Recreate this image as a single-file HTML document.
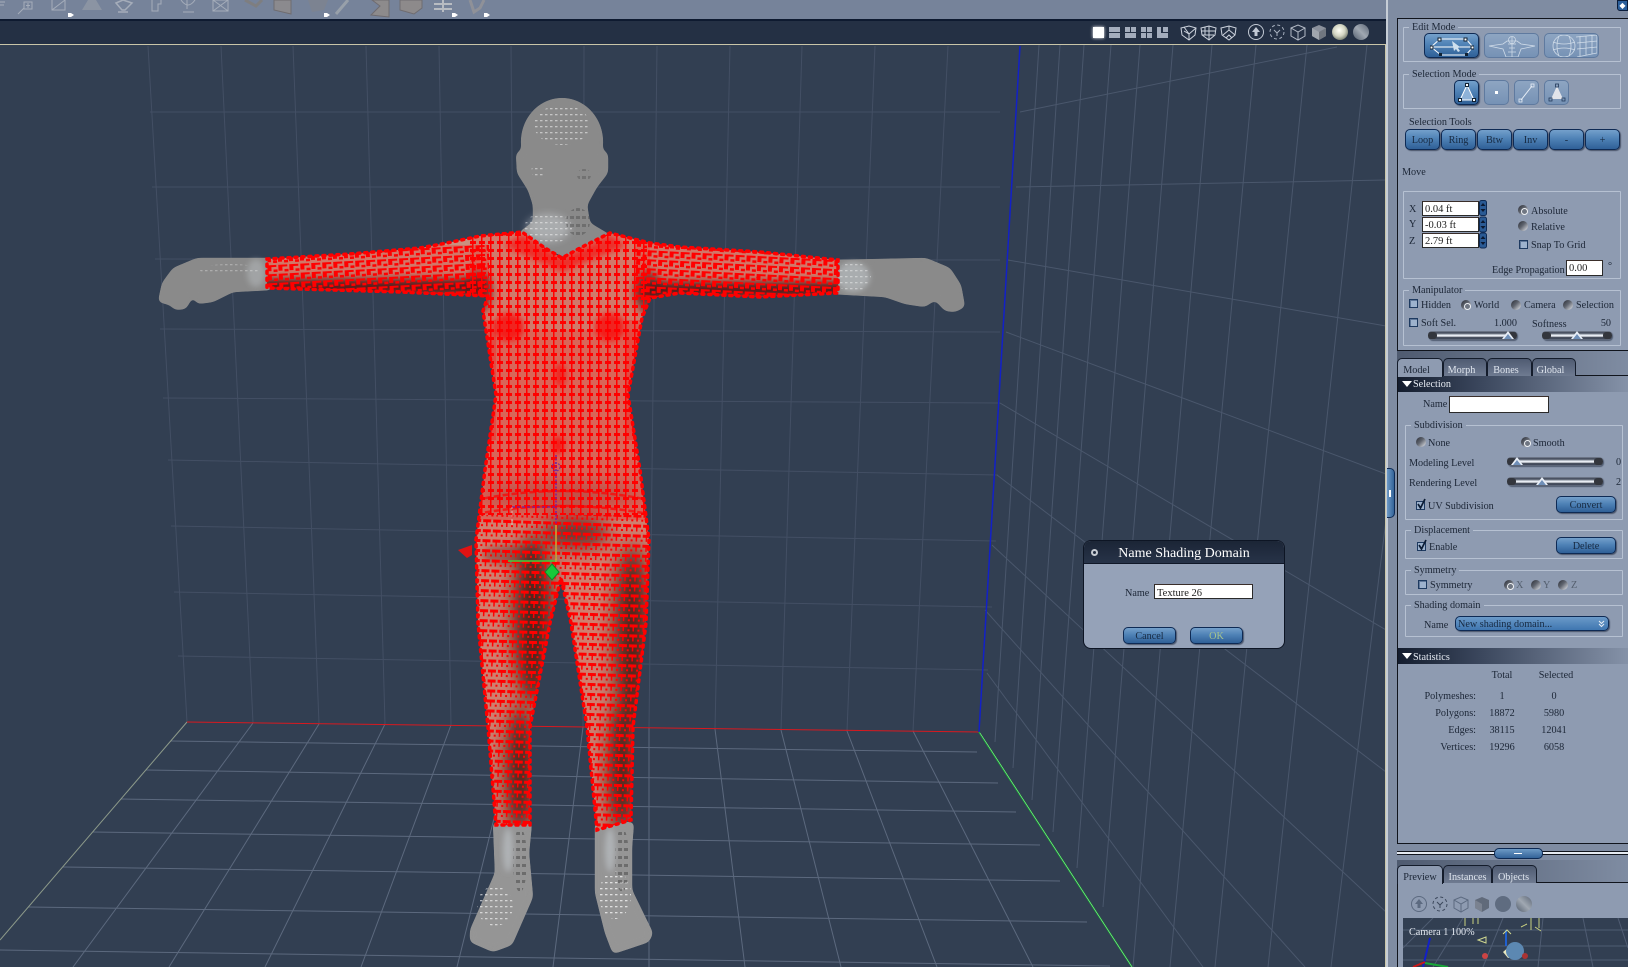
<!DOCTYPE html>
<html><head><meta charset="utf-8"><title>Name Shading Domain</title>
<style>
html,body{margin:0;padding:0;width:1628px;height:967px;overflow:hidden;background:#323f52}
*{box-sizing:border-box}
.a{position:absolute}
.t{position:absolute;white-space:nowrap;font:10.2px/12px "Liberation Serif",serif;color:#1c2636;margin-top:1px}
.w{color:#e6ebf3}
.fs{position:absolute;border:1px solid #b6c1d2;border-radius:1px}
.lg{position:absolute;top:-6px;left:5px;padding:0 3px;background:#8e9bb1;font:10.2px/12px "Liberation Serif",serif;color:#1c2636;white-space:nowrap}
.b{position:absolute;border:1px solid #0e2a54;border-radius:5px;background:linear-gradient(#74a0cb,#4f82b6 45%,#2f6097);box-shadow:1px 1px 1px rgba(20,30,50,.55);font:10.2px/1 "Liberation Serif",serif;color:#172a42;display:flex;align-items:center;justify-content:center;padding-top:4px}
.off{background:linear-gradient(#8ea5c2,#7692b5);border:1px solid #5f7a9f;box-shadow:none}
.b.ic{padding-top:0}
.in{position:absolute;background:#fff;border:1px solid #2a2a2a;border-top-color:#3a2e2a;font:10.5px/15px "Liberation Serif",serif;color:#222;padding-left:2px;white-space:nowrap}
.r{position:absolute;width:10px;height:10px;border-radius:50%;background:linear-gradient(135deg,#2a2d36,#5f646e 45%,#e6e9ee)}
.r.s:after{content:"";position:absolute;left:2.500px;top:2.500px;width:5px;height:5px;border-radius:50%;background:#6f7682;border:1px solid #eef1f5}
.c{position:absolute;width:9px;height:9px;border:1px solid #1e3a60;background:#9db2cd;box-shadow:inset 1px 1px 0 #60789a}
.sl{position:absolute;height:9px;border-radius:4px;background:linear-gradient(#7c8596,#3a4252 22%,#dfe5ee 45%,#f2f5fa 55%,#2e3646 75%,#6a7486);box-shadow:1px 1px 1px rgba(20,30,50,.5)}
.sl:before,.sl:after{content:"";position:absolute;top:1px;width:9px;height:7px;background:#33363d;border-radius:3px}
.sl:before{left:0}.sl:after{right:0}
.th{position:absolute;width:0;height:0;border-left:6px solid transparent;border-right:6px solid transparent;border-bottom:8px solid #e8eef7;z-index:2}
.th:after{content:"";position:absolute;left:-4px;top:3px;border-left:4px solid transparent;border-right:4px solid transparent;border-bottom:5px solid #6f8fb8}
.tab{position:absolute;height:18px;border:1px solid #141c2b;border-bottom:none;border-radius:5px 5px 0 0;font:10.2px/23px "Liberation Serif",serif;text-align:center;background:linear-gradient(#4f5b72,#6f7b91);color:#dfe5ee;overflow:hidden}
.tab.on{background:#8e9bb1;color:#1c2636;z-index:2}
.tab.m{padding-right:7px}
.hd{position:absolute;left:1398px;width:230px;height:16px;background:linear-gradient(90deg,#141d2e,#3a465c 35%,#8592a8);font:10.2px/17px "Liberation Serif",serif;color:#e8edf4;padding-left:15px}
.hd:before{content:"";position:absolute;left:4px;top:5px;border-left:5px solid transparent;border-right:5px solid transparent;border-top:6px solid #fff}
</style></head><body>

<!-- toolbar -->
<div class="a" style="left:0;top:0;width:1388px;height:19px;background:#76839a"></div>
<svg class="a" style="left:0;top:0" width="520" height="19" fill="none" stroke="#a5adba" stroke-width="1">
<path d="M0 2h5M0 5h4"/><path d="M18 14l6-6M24 2h8v7h-8zM28 3v5M26 5.500h4"/>
<path d="M52 0v10h13V0M52 10L65 0"/><path d="M82 10l6-10h8l6 10z" fill="#8b94a3" stroke="none"/>
<path d="M116 3l7-3 9 3-7 7h-3zM118 12h10" stroke-width="1.500"/><path d="M152 0v11h6V4h3V0"/><path d="M187 0v9M181 0q7 10 14 0M183 12h11"/><path d="M213 0v11h15V0zM213 11l15-11M228 11L213 0"/>
<path d="M245 0l11 6 6-6" stroke="#7e7e80" stroke-width="3"/><path d="M274 0v10l17 4V0z" fill="#8b8a8e" stroke="#6f6c70"/><path d="M308 0h20l-4 10-12 2z" fill="#7c8391" stroke="none"/><path d="M336 14l12-14" stroke="#98a0aa" stroke-width="3"/>
<path d="M372 0l8 6-9 9 18 2V0z" fill="#8d8b8c" stroke="#6f6c70"/><path d="M400 0v10l14 4 8-6V0z" fill="#8d8a8b" stroke="#6f6c70"/><path d="M434 4h18M434 9h18M443 0v12" stroke="#b8bcc2" stroke-width="2"/><path d="M470 0l4 12 6-4 4-8" stroke="#8f9198" stroke-width="3"/>
<g fill="#fff" stroke="none"><path d="M68 13h3l3 2-3 2h-3z"/><path d="M324 13h3l3 2-3 2h-3z"/><path d="M452 13h3l3 2-3 2h-3z"/><path d="M484 13h3l3 2-3 2h-3z"/></g>
</svg>
<div class="a" style="left:0;top:19px;width:1388px;height:2px;background:#0e1a30"></div>
<div class="a" style="left:0;top:21px;width:1388px;height:23px;background:#243044"></div>
<div class="a" style="left:0;top:44px;width:1386px;height:1px;background:#c9c5a8"></div>

<!-- view icons -->
<div class="a" style="left:1093px;top:27px;width:11px;height:11px;background:#fff;box-shadow:0 0 3px #fff"></div>
<svg class="a" style="left:1105px;top:22px" width="285" height="22" fill="none">
<g fill="#a4adbd"><rect x="4" y="5" width="11" height="5"/><rect x="4" y="11" width="11" height="5"/><rect x="20" y="5" width="5" height="5"/><rect x="26" y="5" width="5" height="5"/><rect x="20" y="11" width="11" height="5"/><rect x="36" y="5" width="5" height="5"/><rect x="42" y="5" width="5" height="5"/><rect x="36" y="11" width="5" height="5"/><rect x="42" y="11" width="5" height="5"/><path d="M52 5h4v6h7v5H52zM58 5h5v5h-5z"/></g>
<g stroke="#cdd3dd" stroke-width="1"><path d="M76 6l8-2 7 2-1 7-6 5-7-5z"/><path d="M79 5l5 7 7-6M84 12v6M79 9l5 3"/><path d="M96 6l8-2 7 2-1 7-6 5-7-5z"/><path d="M100 5v8M104 4v14M96 9h14M97 13h12"/><path d="M116 6l8-2 7 2-1 7-6 5-7-5z"/><path d="M118 13l6-5 6 5M124 8v-4M121 16l3-3 3 3"/></g>
<circle cx="151" cy="10" r="7.500" stroke="#c2c9d4"/><path d="M151 5l-4 5h2.500v4h3v-4h2.500z" fill="#c2c9d4"/>
<circle cx="172" cy="10" r="7" stroke="#a8b1bf" stroke-dasharray="3 2.500"/><path d="M169 8l3 3 3-3M172 11v3" stroke="#a8b1bf"/>
<path d="M186 6l7-3 7 3v8l-7 4-7-4zM186 6l7 4 7-4M193 10v8" stroke="#b4bbc7"/>
<path d="M207 6l7-3 7 3v8l-7 4-7-4z" fill="#8b919c"/><path d="M207 6l7 4v8l-7-4z" fill="#a0a6ae"/><path d="M221 6l-7 4v8l7-4z" fill="#70767f"/>
<defs><radialGradient id="sp" cx=".45" cy=".4" r=".65"><stop offset="0" stop-color="#fffff6"/><stop offset=".55" stop-color="#d2d4c2"/><stop offset="1" stop-color="#6e7568"/></radialGradient>
<linearGradient id="sp2" x1="0" y1="1" x2="1" y2="0"><stop offset="0" stop-color="#515c6c"/><stop offset=".5" stop-color="#a0a8b2"/><stop offset="1" stop-color="#5c6676"/></linearGradient></defs>
<circle cx="235" cy="10" r="8" fill="url(#sp)"/><circle cx="256" cy="10" r="8" fill="url(#sp2)"/>
</svg>

<!-- viewport -->
<svg class="a" style="left:0;top:45px" width="1386" height="922" viewBox="0 45 1386 922">
<defs>
<pattern id="mesh" width="9" height="8" patternUnits="userSpaceOnUse" patternTransform="translate(2 1)">
 <rect x="0" y="0" width="6" height="3" fill="#f00"/><rect x="2" y="3" width="1.500" height="5" fill="#f00"/>
</pattern>
<pattern id="meshL" width="10" height="10" patternUnits="userSpaceOnUse" patternTransform="translate(1 2) rotate(2)">
 <rect x="0" y="0" width="8" height="3" fill="#f00"/><rect x="3" y="3" width="1.500" height="4" fill="#f00"/><rect x="8" y="5" width="2" height="2" fill="#f00"/>
</pattern>
<pattern id="meshA" width="11" height="9" patternUnits="userSpaceOnUse" patternTransform="rotate(-3)">
 <rect x="0" y="0" width="4" height="6" fill="#f00"/><rect x="0" y="0" width="9" height="2" fill="#f00"/><rect x="6" y="4.500" width="4" height="2.500" fill="#f00"/>
</pattern>
<pattern id="meshB" width="11" height="9" patternUnits="userSpaceOnUse" patternTransform="rotate(3)">
 <rect x="0" y="0" width="4" height="6" fill="#f00"/><rect x="0" y="0" width="9" height="2" fill="#f00"/><rect x="6" y="4.500" width="4" height="2.500" fill="#f00"/>
</pattern>
<pattern id="dots" width="5" height="6" patternUnits="userSpaceOnUse"><rect width="2.500" height="1.300" fill="#fff"/></pattern>
<pattern id="dotsD" width="6" height="8" patternUnits="userSpaceOnUse"><rect width="4" height="3" fill="#3a3a3a"/></pattern>
<filter id="bl" x="-100%" y="-60%" width="300%" height="220%"><feGaussianBlur stdDeviation="9"/></filter>
<filter id="bs" x="-40%" y="-60%" width="180%" height="220%"><feGaussianBlur stdDeviation="4"/></filter>
<filter id="bt" x="-40%" y="-40%" width="180%" height="180%"><feGaussianBlur stdDeviation="3"/></filter>
<filter id="goo" x="-5%" y="-5%" width="110%" height="110%" color-interpolation-filters="sRGB"><feGaussianBlur stdDeviation="3"/><feColorMatrix values="1 0 0 0 0 0 1 0 0 0 0 0 1 0 0 0 0 0 18 -8"/></filter>
<path id="body" d="M267 259L350 254L420 248L447 243L480 236L522 232L545 248L562 258L580 248L610 233L650 243L680 247L760 252L838 260L838 293L760 297L680 293L650 298L642 318L628 395L640 470L649 540L646 623L633 727L631 820L597 830L587 727L571 623L561 578L550 623L530 727L530 825L496 825L488 727L478 623L476 540L485 470L496 395L483 311L488 296L400 292L267 288Z"/>
<mask id="bm" maskUnits="userSpaceOnUse" x="0" y="0" width="1386" height="967"><use href="#body" fill="#fff" filter="url(#goo)"/></mask>
</defs>

<!-- back wall grid -->
<g stroke="#434f64" stroke-width="1" fill="none">
<path d="M148 46L187 722M221 46L253 723M293 46L319 724M366 46L385 724M439 46L451 725M511 46L517 726M584 46L583 727M657 46L649 728M730 46L715 729M802 46L781 730M875 46L847 731M948 46L913 731"/>
<path d="M150 112L1000 112M152 187L1000 187M155 259L1000 260M160 329L1000 332M163 398L1000 403M168 460L998 475M171 526L996 541M174 592L992 607M178 656L988 670"/>
</g>
<!-- right wall -->
<g stroke="#4a576c" stroke-width="1" fill="none">
<path d="M1039 45L995 742M1060 45L1013 768M1084 45L1032 800M1111 45L1053 832M1140 45L1077 868M1173 45L1103 907M1212 45L1133 967M1256 45L1170 967M1307 45L1215 967M1367 45L1268 967M1386 520L1331 967"/>
<path d="M1020 112L1337 47M1016 187L1386 180M1008 260L1386 326M1006 332L1386 474M1000 403L1386 630M997 475L1386 772M992 545L1386 912M985 610L1305 967M987 673L1203 967"/>
</g>
<!-- floor -->
<g stroke="#5c697e" stroke-width="1" fill="none">
<path d="M253 723L73 967M319 724L169 967M385 724L265 967M451 725L361 967M517 726L457 967M583 727L553 967M649 728L649 967M715 729L745 967M781 730L841 967M847 731L937 967M913 731L1033 967"/>
<path d="M171 741L977 752M146 770L998 783M121 799L1016 812M93 832L1040 845M63 867L1060 881M28 907L1087 922M0 950L1110 966"/>
</g>
<path d="M187 722L0 940" stroke="#8d9a8a" stroke-width="1" fill="none"/>
<path d="M187 722L979 732" stroke="#d8191f" stroke-width="1" fill="none"/>
<path d="M979 732L1020 46" stroke="#1220c8" stroke-width="1.500" fill="none"/>
<path d="M979 732L1132 967" stroke="#18a838" stroke-width="1.600" fill="none"/>
<path d="M980 733L1132 967" stroke="#b9f0b0" stroke-width=".5" fill="none"/>

<!-- gray parts -->
<g fill="#8a8a8a" filter="url(#goo)">
<ellipse cx="562" cy="142" rx="41" ry="44"/>
<path d="M516 153L522 150L602 150L608 153L608 173L597 187L587 205L590 223L612 236L603 242L567 258L530 242L518 233L533 222L533 205L528 190L517 173Z"/>
<path d="M272 258L197 258L173 268L162 283L158 302L170 305L175 310L186 309L193 296L197 304L213 302L233 292L272 290Z"/>
<path d="M832 260L926 258L950 268L961 285L965 307L955 312L945 311L935 300L925 307L905 304L885 297L832 294Z"/>
<path d="M493 822L532 822L529 853L533 897L512 945L493 952L470 942L470 930L495 873Z" fill="#959595"/>
<path d="M595 822L634 822L632 847L632 890L653 933L649 942L613 954L605 933L595 893L595 873Z" fill="#959595"/>
</g>
<!-- gray highlights -->
<ellipse cx="562" cy="125" rx="28" ry="20" fill="url(#dots)" opacity=".5"/>
<ellipse cx="538" cy="171" rx="7" ry="6" fill="url(#dots)" opacity=".45"/>
<ellipse cx="584" cy="175" rx="7" ry="6" fill="url(#dotsD)" opacity=".3"/>
<ellipse cx="548" cy="228" rx="22" ry="14" fill="#c9ced2" opacity=".5" filter="url(#bs)"/>
<ellipse cx="548" cy="228" rx="24" ry="16" fill="url(#dots)" opacity=".45"/>
<ellipse cx="578" cy="222" rx="12" ry="14" fill="url(#dotsD)" opacity=".35"/>
<ellipse cx="256" cy="273" rx="9" ry="14" fill="#c4cace" opacity=".4" filter="url(#bt)"/>
<ellipse cx="853" cy="277" rx="17" ry="15" fill="#c4cace" opacity=".55" filter="url(#bt)"/>
<ellipse cx="853" cy="277" rx="18" ry="15" fill="url(#dots)" opacity=".4"/>
<ellipse cx="230" cy="270" rx="30" ry="6" fill="url(#dots)" opacity=".3"/>
<ellipse cx="495" cy="906" rx="18" ry="20" fill="url(#dots)" opacity=".6"/>
<ellipse cx="615" cy="895" rx="16" ry="24" fill="url(#dots)" opacity=".7"/>
<ellipse cx="520" cy="860" rx="7" ry="32" fill="url(#dotsD)" opacity=".45"/>
<ellipse cx="622" cy="860" rx="7" ry="32" fill="url(#dotsD)" opacity=".45"/>
<ellipse cx="508" cy="850" rx="5" ry="22" fill="#c6ccd2" opacity=".55" filter="url(#bt)"/>
<ellipse cx="610" cy="850" rx="5" ry="22" fill="#c6ccd2" opacity=".55" filter="url(#bt)"/>

<!-- body -->
<g mask="url(#bm)">
 <use href="#body" fill="#c9917f"/>
 <rect x="262" y="279" width="225" height="16" fill="#2e1f1d" filter="url(#bs)" opacity=".95"/>
 <rect x="640" y="282" width="205" height="16" fill="#2e1f1d" filter="url(#bs)" opacity=".95"/>
 <ellipse cx="478" cy="292" rx="14" ry="22" fill="#2e1c1a" filter="url(#bs)" opacity=".6"/>
 <ellipse cx="648" cy="292" rx="14" ry="22" fill="#2e1c1a" filter="url(#bs)" opacity=".6"/>
 <ellipse cx="533" cy="620" rx="20" ry="85" fill="#20120f" filter="url(#bl)" opacity=".85"/>
 <ellipse cx="520" cy="770" rx="14" ry="65" fill="#20120f" filter="url(#bl)" opacity=".9"/>
 <ellipse cx="632" cy="640" rx="18" ry="95" fill="#20120f" filter="url(#bl)" opacity=".85"/>
 <ellipse cx="622" cy="770" rx="14" ry="65" fill="#20120f" filter="url(#bl)" opacity=".9"/>
 <ellipse cx="575" cy="533" rx="34" ry="16" fill="#2a1614" filter="url(#bl)" opacity=".7"/>
 <ellipse cx="510" cy="555" rx="28" ry="10" fill="#3a2220" filter="url(#bs)" opacity=".4"/>
 <ellipse cx="562" cy="495" rx="80" ry="12" fill="#3a2220" filter="url(#bl)" opacity=".3"/>
 <rect x="470" y="230" width="180" height="100" fill="#f00" opacity=".16"/>
 <rect x="470" y="330" width="180" height="190" fill="#f00" opacity=".3"/>
 <rect x="460" y="520" width="200" height="310" fill="#f00" opacity=".12"/>
 <rect x="264" y="245" width="225" height="60" fill="#f00" opacity=".18"/>
 <rect x="636" y="240" width="210" height="60" fill="#f00" opacity=".18"/>
 <rect x="264" y="245" width="225" height="60" fill="url(#meshA)"/>
 <rect x="636" y="240" width="210" height="60" fill="url(#meshB)"/>
 <rect x="470" y="230" width="180" height="285" fill="url(#mesh)"/>
 <rect x="460" y="515" width="200" height="320" fill="url(#meshL)"/>
 <g fill="none" stroke="#f00" stroke-width="2.500" stroke-dasharray="6 3" opacity=".7">
  <path d="M476 500Q562 482 649 500M476 514Q562 498 649 514"/>
 </g>
 <path d="M522 234L562 258L610 235L626 246L562 272L504 246Z" fill="#f00" opacity=".6" filter="url(#bt)"/>
 <ellipse cx="509" cy="327" rx="15" ry="14" fill="#f00" filter="url(#bt)" opacity=".7"/>
 <ellipse cx="610" cy="327" rx="15" ry="14" fill="#f00" filter="url(#bt)" opacity=".7"/>
 <ellipse cx="560" cy="375" rx="6" ry="12" fill="#f00" filter="url(#bt)" opacity=".6"/>
 <ellipse cx="558" cy="445" rx="6" ry="9" fill="#f00" filter="url(#bt)" opacity=".7"/>
 <rect x="478" y="320" width="18" height="120" fill="#f00" opacity=".25"/>
 <rect x="625" y="320" width="18" height="120" fill="#f00" opacity=".25"/>
</g>
<use href="#body" fill="none" stroke="#f00" stroke-width="3.500" stroke-linecap="round" stroke-dasharray="2 5"/>

<!-- manipulator -->
<g fill="none">
<path d="M556 455V562" stroke="#7a1ea0" stroke-width="1.500" stroke-dasharray="2 1.500"/>
<path d="M556 525V562" stroke="#c8b030" stroke-width="1.500"/>
<path d="M512 507H556" stroke="#6a22a8" stroke-width="1.200" stroke-dasharray="3 2"/>
<path d="M512 507V525" stroke="#fff" stroke-width="1" stroke-dasharray="2 2" opacity=".5"/>
<path d="M508 561H555" stroke="#3fd23a" stroke-width="1.500"/>
<circle cx="556" cy="467" r="4" stroke="#5a2cb0" stroke-dasharray="2 1.500"/>
</g>
<path d="M552 564l7 8-7 8-7-8z" fill="#17c93a" stroke="#0d8a26"/>
<path d="M458 550l14-5v10l-5 3z" fill="#e01212"/>
</svg>

<!-- divider strip -->
<div class="a" style="left:1386px;top:0;width:2px;height:967px;background:#c6cdd6"></div>
<div class="a" style="left:1385px;top:45px;width:1px;height:922px;background:#c9c5a8"></div>
<div class="a" style="left:1388px;top:0;width:240px;height:967px;background:#7f8ca2"></div>
<div class="a" style="left:1387px;top:468px;width:8px;height:50px;background:linear-gradient(90deg,#6d9ac6,#336399);border:1px solid #0e2a54;border-left:none;border-radius:0 5px 5px 0"><div class="a" style="left:2px;top:21px;width:2px;height:7px;background:#fff"></div></div>
<div class="a" style="left:1617px;top:0;width:11px;height:11px;background:#2b5f9b;border:1px solid #0a1c3a;border-radius:0 0 0 3px;color:#fff;font:8px/9px 'Liberation Sans',sans-serif;text-align:center">◆</div>

<!-- top panel -->
<div class="a" style="left:1397px;top:18px;width:231px;height:333px;background:#8e9bb1;border-left:1px solid #10141c;border-top:1px solid #10141c;border-bottom:1px solid #10141c"></div>

<div class="fs" style="left:1403px;top:27px;width:218px;height:35px"><div class="lg">Edit Mode</div></div>
<div class="b ic" style="left:1424px;top:33px;width:55px;height:25px"><svg width="44" height="20" fill="none" stroke="#fff" stroke-width="1"><path d="M1 11L10 3H36L43 11L36 19H11Z"/><path d="M2 11H42"/><path d="M22 5l8 6-2 1 2 3-2 1-2-3-2 2z" fill="#cfe0ee" stroke="none"/><g fill="#fff" stroke="#123"><rect x="8" y="2" width="3" height="3"/><rect x="34" y="2" width="3" height="3"/><rect x="0" y="10" width="3" height="3"/><rect x="41" y="10" width="3" height="3"/></g><g fill="#123" stroke="none"><rect x="9" y="17" width="3" height="3"/><rect x="35" y="17" width="3" height="3"/></g></svg></div>
<div class="b off ic" style="left:1484px;top:33px;width:55px;height:25px"><svg width="50" height="22" fill="none" stroke="#cfdbe8" stroke-width=".8"><path d="M2 11L16 9L20 6H30L34 9L48 11L34 14L31 22H19L16 14Z"/><circle cx="25" cy="5" r="3.500"/><path d="M21 9H29M22 13H28M25 2V22M21 17H29"/></svg></div>
<div class="b off ic" style="left:1544px;top:33px;width:55px;height:25px"><svg width="50" height="22" fill="none" stroke="#cfdbe8" stroke-width=".8"><circle cx="17" cy="11" r="11"/><path d="M6 7q11 4 22 0M6 15q11-4 22 0M12 1q-4 10 0 20M22 1q4 10 0 20"/><path d="M29 2L50 0V18L30 22M33 1V21M39 1V20M45 0V19M30 8L50 6M30 14L50 12"/></svg></div>

<div class="fs" style="left:1403px;top:74px;width:218px;height:35px"><div class="lg">Selection Mode</div></div>
<div class="b ic" style="left:1454px;top:80px;width:25px;height:25px"><svg width="20" height="20"><path d="M10 2L17 17H3Z" fill="#8eb2d8" stroke="#fff"/><g fill="#fff" stroke="#123"><rect x="8.500" y="0.500" width="3" height="3"/><rect x="1.500" y="15.500" width="3" height="3"/><rect x="15.500" y="15.500" width="3" height="3"/></g></svg></div>
<div class="b off ic" style="left:1484px;top:80px;width:25px;height:25px"><div style="width:3px;height:3px;background:#fff"></div></div>
<div class="b off ic" style="left:1514px;top:80px;width:25px;height:25px"><svg width="20" height="20" fill="none" stroke="#e6edf5"><path d="M4 17L15 3"/><rect x="14" y="1" width="3" height="3" stroke-width=".8"/><rect x="2" y="16" width="3" height="3" stroke-width=".8"/></svg></div>
<div class="b off ic" style="left:1544px;top:80px;width:25px;height:25px"><svg width="20" height="20"><path d="M10 3L16 16H4Z" fill="#e2e4ea"/><g fill="none" stroke="#243a5a" stroke-width=".8"><rect x="8.500" y="1" width="3" height="3"/><rect x="2" y="15" width="3" height="3"/><rect x="15" y="15" width="3" height="3"/></g></svg></div>

<div class="t" style="left:1409px;top:116px">Selection Tools</div>
<div class="b" style="left:1405px;top:129px;width:35px;height:21px">Loop</div>
<div class="b" style="left:1441px;top:129px;width:35px;height:21px">Ring</div>
<div class="b" style="left:1477px;top:129px;width:35px;height:21px">Btw</div>
<div class="b" style="left:1513px;top:129px;width:35px;height:21px">Inv</div>
<div class="b" style="left:1549px;top:129px;width:35px;height:21px">-</div>
<div class="b" style="left:1585px;top:129px;width:35px;height:21px">+</div>
<div class="t" style="left:1402px;top:166px">Move</div>

<div class="fs" style="left:1403px;top:191px;width:218px;height:88px"></div>
<div class="t" style="left:1409px;top:203px">X</div><div class="t" style="left:1409px;top:218px">Y</div><div class="t" style="left:1409px;top:235px">Z</div>
<div class="in" style="left:1422px;top:201px;width:57px;height:15px">0.04 ft</div>
<div class="in" style="left:1422px;top:217px;width:57px;height:15px">-0.03 ft</div>
<div class="in" style="left:1422px;top:233px;width:57px;height:15px">2.79 ft</div>
<svg class="a" style="left:1479px;top:200px" width="9" height="49"><g fill="#2a5a94" stroke="#0e2a54"><rect x=".5" y=".5" width="7" height="15" rx="2"/><rect x=".5" y="17" width="7" height="15" rx="2"/><rect x=".5" y="33" width="7" height="15" rx="2"/></g><path d="M4 3l2.500 3h-5zM4 12l2.500-3h-5zM4 20l2.500 3h-5zM4 29l2.500-3h-5zM4 36l2.500 3h-5zM4 45l2.500-3h-5z" fill="#0b1830"/></svg>
<div class="r s" style="left:1518px;top:205px"></div><div class="t" style="left:1531px;top:205px">Absolute</div>
<div class="r" style="left:1518px;top:221px"></div><div class="t" style="left:1531px;top:221px">Relative</div>
<div class="c" style="left:1519px;top:240px"></div><div class="t" style="left:1531px;top:239px">Snap To Grid</div>
<div class="t" style="left:1492px;top:264px">Edge Propagation</div>
<div class="in" style="left:1566px;top:260px;width:37px;height:16px">0.00</div>
<div class="t" style="left:1608px;top:260px">°</div>

<div class="fs" style="left:1403px;top:290px;width:218px;height:56px"><div class="lg">Manipulator</div></div>
<div class="c" style="left:1409px;top:299px"></div><div class="t" style="left:1421px;top:299px">Hidden</div>
<div class="r s" style="left:1461px;top:300px"></div><div class="t" style="left:1474px;top:299px">World</div>
<div class="r" style="left:1511px;top:300px"></div><div class="t" style="left:1524px;top:299px">Camera</div>
<div class="r" style="left:1563px;top:300px"></div><div class="t" style="left:1576px;top:299px">Selection</div>
<div class="c" style="left:1409px;top:318px"></div><div class="t" style="left:1421px;top:317px">Soft Sel.</div>
<div class="t" style="left:1494px;top:317px;width:22px;text-align:right">1.000</div>
<div class="t" style="left:1532px;top:318px">Softness</div>
<div class="t" style="left:1591px;top:317px;width:20px;text-align:right">50</div>
<div class="sl" style="left:1428px;top:331px;width:89px"></div><div class="th" style="left:1502px;top:331px"></div>
<div class="sl" style="left:1542px;top:331px;width:70px"></div><div class="th" style="left:1571px;top:331px"></div>

<!-- model tabs -->
<div class="a" style="left:1397px;top:351px;width:231px;height:24px;background:linear-gradient(90deg,#4f5b70,#7f8ca2)"></div>
<div class="a" style="left:1397px;top:375px;width:231px;height:469px;background:#8e9bb1;border-left:1px solid #10141c;border-bottom:1px solid #10141c;border-top:1px solid #10141c"></div>
<div class="tab on m" style="left:1397px;top:358px;width:46px;height:19px;border-bottom:0">Model</div>
<div class="tab m" style="left:1443px;top:358px;width:44px">Morph</div>
<div class="tab m" style="left:1487px;top:358px;width:45px">Bones</div>
<div class="tab m" style="left:1532px;top:358px;width:44px">Global</div>
<div class="hd" style="top:376px">Selection</div>
<div class="t" style="left:1423px;top:398px">Name</div>
<div class="in" style="left:1449px;top:396px;width:100px;height:17px"></div>

<div class="fs" style="left:1405px;top:425px;width:218px;height:95px"><div class="lg">Subdivision</div></div>
<div class="r" style="left:1416px;top:437px"></div><div class="t" style="left:1428px;top:437px">None</div>
<div class="r s" style="left:1521px;top:437px"></div><div class="t" style="left:1533px;top:437px">Smooth</div>
<div class="t" style="left:1409px;top:457px">Modeling Level</div>
<div class="sl" style="left:1507px;top:457px;width:96px"></div><div class="th" style="left:1511px;top:457px"></div>
<div class="t" style="left:1616px;top:456px">0</div>
<div class="t" style="left:1409px;top:477px">Rendering Level</div>
<div class="sl" style="left:1507px;top:477px;width:96px"></div><div class="th" style="left:1536px;top:477px"></div>
<div class="t" style="left:1616px;top:476px">2</div>
<svg class="a" style="left:1415px;top:498px" width="13" height="13"><rect x="1.500" y="3.500" width="8" height="8" fill="#9db2cd" stroke="#1e3a60"/><path d="M3 6l2.500 4L10 1" fill="none" stroke="#0c1c34" stroke-width="1.700"/></svg>
<div class="t" style="left:1428px;top:500px">UV Subdivision</div>
<div class="b" style="left:1556px;top:496px;width:60px;height:17px">Convert</div>

<div class="fs" style="left:1405px;top:530px;width:218px;height:29px"><div class="lg">Displacement</div></div>
<svg class="a" style="left:1416px;top:539px" width="13" height="13"><rect x="1.500" y="3.500" width="8" height="8" fill="#9db2cd" stroke="#1e3a60"/><path d="M3 6l2.500 4L10 1" fill="none" stroke="#0c1c34" stroke-width="1.700"/></svg>
<div class="t" style="left:1429px;top:541px">Enable</div>
<div class="b" style="left:1556px;top:537px;width:60px;height:17px">Delete</div>

<div class="fs" style="left:1405px;top:570px;width:218px;height:25px"><div class="lg">Symmetry</div></div>
<div class="c" style="left:1418px;top:580px"></div><div class="t" style="left:1430px;top:579px">Symmetry</div>
<div class="r s" style="left:1504px;top:580px"></div><div class="t" style="left:1516px;top:579px;color:#55606f">X</div>
<div class="r" style="left:1531px;top:580px"></div><div class="t" style="left:1543px;top:579px;color:#55606f">Y</div>
<div class="r" style="left:1558px;top:580px"></div><div class="t" style="left:1571px;top:579px;color:#55606f">Z</div>

<div class="fs" style="left:1405px;top:605px;width:218px;height:32px"><div class="lg">Shading domain</div></div>
<div class="t" style="left:1424px;top:619px">Name</div>
<div class="b" style="left:1455px;top:616px;width:154px;height:15px;justify-content:flex-start;padding:4px 0 0 2px;background:linear-gradient(#6b9ac9,#3f76b0)">New shading domain...<svg class="a" style="right:3px;top:3px" width="7" height="8" fill="none" stroke="#e8eef5"><path d="M1 1l2.500 2.500L6 1M1 4l2.500 2.500L6 4"/></svg></div>

<div class="hd" style="top:648px;line-height:19px">Statistics</div>
<div class="t" style="left:1482px;top:669px;width:40px;text-align:center">Total</div>
<div class="t" style="left:1531px;top:669px;width:50px;text-align:center">Selected</div>
<div class="t" style="left:1416px;top:690px;width:60px;text-align:right">Polymeshes:</div><div class="t" style="left:1482px;top:690px;width:40px;text-align:center">1</div><div class="t" style="left:1534px;top:690px;width:40px;text-align:center">0</div>
<div class="t" style="left:1416px;top:707px;width:60px;text-align:right">Polygons:</div><div class="t" style="left:1482px;top:707px;width:40px;text-align:center">18872</div><div class="t" style="left:1534px;top:707px;width:40px;text-align:center">5980</div>
<div class="t" style="left:1416px;top:724px;width:60px;text-align:right">Edges:</div><div class="t" style="left:1482px;top:724px;width:40px;text-align:center">38115</div><div class="t" style="left:1534px;top:724px;width:40px;text-align:center">12041</div>
<div class="t" style="left:1416px;top:741px;width:60px;text-align:right">Vertices:</div><div class="t" style="left:1482px;top:741px;width:40px;text-align:center">19296</div><div class="t" style="left:1534px;top:741px;width:40px;text-align:center">6058</div>

<!-- splitter -->
<div class="a" style="left:1397px;top:851px;width:231px;height:4px;background:#e6ebf2;border-top:1px solid #10141c;border-bottom:1px solid #10141c"></div>
<div class="a" style="left:1494px;top:848px;width:49px;height:11px;border:1px solid #0e2a54;border-radius:5px;background:linear-gradient(#6d9ac6,#336399)"><div class="a" style="left:19px;top:4px;width:8px;height:1px;background:#fff"></div></div>

<!-- preview -->
<div class="a" style="left:1397px;top:860px;width:231px;height:22px;background:linear-gradient(90deg,#4f5b70,#7f8ca2)"></div>
<div class="a" style="left:1397px;top:882px;width:231px;height:85px;background:#8e9bb1;border-left:1px solid #10141c;border-top:1px solid #10141c"></div>
<div class="tab on" style="left:1397px;top:865px;width:46px;height:19px;line-height:24px">Preview</div>
<div class="tab" style="left:1443px;top:865px;width:49px;line-height:24px">Instances</div>
<div class="tab" style="left:1492px;top:865px;width:45px;line-height:24px;padding-right:2px">Objects</div>
<svg class="a" style="left:1408px;top:893px" width="128" height="22" fill="none">
<circle cx="11" cy="11" r="7.500" stroke="#5c6a80"/><path d="M11 6l-4 5h2.500v4h3v-4h2.500z" fill="#5c6a80"/>
<circle cx="32" cy="11" r="7" stroke="#3c485c" stroke-dasharray="3 2.500"/><path d="M29 9l3 3 3-3M32 12v3" stroke="#3c485c"/>
<path d="M46 7l7-3 7 3v8l-7 4-7-4zM46 7l7 4 7-4M53 11v8" stroke="#5c6a80"/>
<path d="M67 7l7-3 7 3v8l-7 4-7-4z" fill="#606a7a"/><path d="M67 7l7 4v8l-7-4z" fill="#7a8290"/>
<circle cx="95" cy="11" r="8" fill="#5f6c80"/><circle cx="116" cy="11" r="8" fill="url(#sp2)"/>
</svg>
<svg class="a" style="left:1403px;top:918px" width="225" height="49">
<rect width="225" height="49" fill="#323f52"/>
<g stroke="#4f5c72" fill="none"><path d="M30 0L0 30M60 0L30 49M100 0L80 49M140 0L135 49M180 0L190 49M215 0L225 30M0 12H225M0 28H225M0 42H225"/></g>
<path d="M20 49L27 20" stroke="#1220c8" stroke-width="2"/><path d="M22 45L45 49" stroke="#18a838" stroke-width="2"/><path d="M10 49L22 44" stroke="#c81818" stroke-width="2"/>
<path d="M62 0v8M70 0v6M75 0v6M128 0v12M136 0v10M118 9l6-3M132 9l6 4" stroke="#c8d080" fill="none"/>
<path d="M100 34l8-7 10 3-3 8-10 2z" fill="#e8e8c0"/><path d="M103 12v16" stroke="#2060d0" stroke-width="2"/><circle cx="112" cy="33" r="9" fill="#5c88b2"/><circle cx="122" cy="38" r="3" fill="#a33"/><circle cx="82" cy="38" r="3" fill="#c44"/>
<path d="M75 22l8-3v6zM100 16l4-4 4 4" stroke="#d0d890" fill="none"/>
</svg>
<div class="t w" style="left:1409px;top:926px">Camera 1 100%</div>

<!-- dialog -->
<div class="a" style="left:1083px;top:540px;width:202px;height:109px;border:1px solid #0d1524;border-radius:8px;background:#95a2b8;overflow:hidden">
<div class="a" style="left:0;top:0;width:200px;height:23px;background:linear-gradient(#1b2536,#273348);border-bottom:1px solid #101828"></div>
<div class="a" style="left:7px;top:8px;width:7px;height:7px;border-radius:50%;border:2px solid #c6cbd2"></div>
<div class="a" style="left:0;top:4px;width:200px;text-align:center;font:14px/17px 'Liberation Serif',serif;color:#fff">Name Shading Domain</div>
</div>
<div class="t" style="left:1125px;top:587px">Name</div>
<div class="in" style="left:1154px;top:584px;width:99px;height:15px;padding-top:1px;line-height:15px">Texture 26</div>
<div class="b" style="left:1123px;top:627px;width:53px;height:17px">Cancel</div>
<div class="b" style="left:1190px;top:627px;width:53px;height:17px;color:#a6c48e">OK</div>
</body></html>
